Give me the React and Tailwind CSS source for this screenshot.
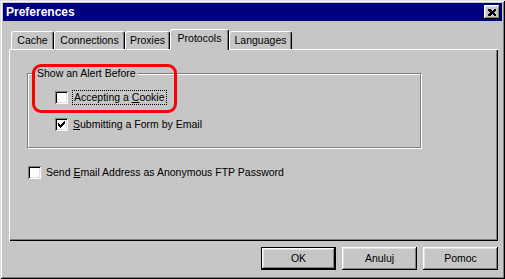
import React from 'react';

const raised =
  'shadow-[inset_-1px_-1px_0_#000,inset_1px_1px_0_#fff,inset_-2px_-2px_0_#808080,inset_2px_2px_0_#dfdfdf]';

const CheckMark = () => {
  const tops = [2, 3, 4, 3, 2, 1, 0];
  return (
    <svg width="7" height="7" viewBox="0 0 7 7" shapeRendering="crispEdges">
      {tops.map((t, i) => (
        <rect key={i} x={i} y={t} width="1" height="3" fill="#000" />
      ))}
    </svg>
  );
};

const Checkbox = ({ checked }) => (
  <div className="w-[13px] h-[13px] bg-white flex items-center justify-center shrink-0 shadow-[inset_1px_1px_0_#808080,inset_-1px_-1px_0_#fff,inset_2px_2px_0_#000,inset_-2px_-2px_0_#dfdfdf]">
    {checked && <CheckMark />}
  </div>
);

const Tab = ({ label, width, selected }) => (
  <div
    className={`flex items-center justify-center rounded-t-[3px] border-t border-l border-white border-r border-r-black shadow-[inset_-1px_0_0_#808080] ${
      selected ? 'relative z-10 h-[21px] -mb-px pb-[2px] bg-[#c6c6c6]' : 'h-[18px]'
    }`}
    style={{ width }}
  >
    {label}
  </div>
);

const Button = ({ children, isDefault }) => (
  <div
    className={`w-[75px] h-[23px] flex items-center justify-center ${
      isDefault ? 'border border-black' : ''
    }`}
  >
    <div className={`w-full h-full flex items-center justify-center ${raised}`}>{children}</div>
  </div>
);

export default function App() {
  return (
    <div
      className="relative w-[505px] h-[279px] bg-[#c6c6c6] p-[3px] flex flex-col text-[10.5px] text-black shadow-[inset_1px_1px_0_#dfdfdf,inset_-1px_-1px_0_#000,inset_2px_2px_0_#fff,inset_-2px_-2px_0_#808080]"
      style={{ fontFamily: '"Liberation Sans", Arial, sans-serif' }}
    >
      <div className="h-[18px] bg-[#000080] flex items-center justify-between pl-[3px] pr-[2px]">
        <span className="text-white font-bold text-[12px]">Preferences</span>
        <div className={`w-[16px] h-[14px] bg-[#c6c6c6] flex items-center justify-center ${raised}`}>
          <svg width="8" height="7" viewBox="0 0 8 7" shapeRendering="crispEdges">
            <path d="M0 0h2l2 2l2-2h2v1l-2 2.5l2 2.5v1h-2l-2-2l-2 2h-2v-1l2-2.5l-2-2.5z" fill="#000" />
          </svg>
        </div>
      </div>

      <div className="mt-[8px] ml-[6px] w-[489px]">
        <div className="flex items-end h-[20px] pl-[2px]">
          <Tab label="Cache" width={43} />
          <Tab label="Connections" width={71} />
          <Tab label="Proxies" width={45} />
          <Tab label="Protocols" width={59} selected />
          <Tab label="Languages" width={63} />
        </div>
        <div className="h-[192px] pt-[24px] pl-[18px] shadow-[inset_1px_1px_0_#fff,inset_-1px_-1px_0_#000,inset_-2px_-2px_0_#808080]">
          <div className="relative w-[394px] h-[75px] border border-[#808080] shadow-[1px_1px_0_#fff,inset_1px_1px_0_#fff]">
            <span className="absolute -top-[8px] left-[7px] px-[2px] bg-[#c6c6c6]">Show an Alert Before</span>
            <div className="flex flex-col gap-[13px] pt-[16px] pl-[27px]">
              <div className="flex items-center gap-[4px]">
                <Checkbox />
                <span className="px-[1px] border border-dotted border-black leading-[13px]">
                  Accepting a <u>C</u>ookie
                </span>
              </div>
              <div className="flex items-center gap-[5px]">
                <Checkbox checked />
                <span className="leading-[13px]">
                  <u>S</u>ubmitting a Form by Email
                </span>
              </div>
            </div>
          </div>
          <div className="flex items-center gap-[5px] mt-[18px] ml-[1px]">
            <Checkbox />
            <span className="leading-[13px]">
              Send <u>E</u>mail Address as Anonymous FTP Password
            </span>
          </div>
        </div>
      </div>

      <div className="flex justify-end gap-[6px] mt-[6px] pr-[4px]">
        <Button isDefault>OK</Button>
        <Button>Anuluj</Button>
        <Button>Pomoc</Button>
      </div>

      <div className="absolute left-[32px] top-[64px] w-[145px] h-[49px] rounded-[9px] border-[3px] border-[#ff0000] pointer-events-none" />
    </div>
  );
}
